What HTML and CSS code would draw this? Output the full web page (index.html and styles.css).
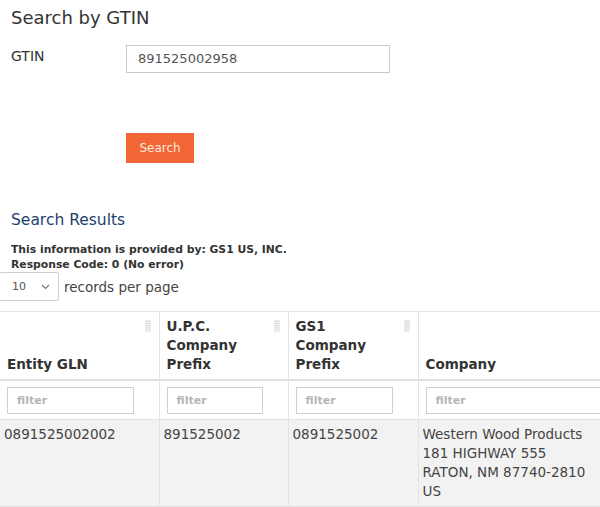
FILE: index.html
```html
<!DOCTYPE html>
<html>
<head>
<meta charset="utf-8">
<link rel="stylesheet" href="styles.css">
</head>
<body>
<div class="page">
  <section class="search">
    <h1 class="title">Search by GTIN</h1>
    <div class="field">
      <label class="label">GTIN</label>
      <div class="input">891525002958</div>
    </div>
    <div class="actions">
      <button class="btn">Search</button>
    </div>
  </section>
  <section class="results">
    <h2 class="subtitle">Search Results</h2>
    <p class="info">This information is provided by: GS1 US, INC.<br>Response Code: 0 (No error)</p>
    <div class="length">
      <div class="select"><span>10</span>
        <svg class="chev" width="9" height="6" viewBox="0 0 9 6"><path d="M1 1l3.5 3.5L8 1" fill="none" stroke="#777" stroke-width="1.2"/></svg>
      </div>
      <span class="length-label">records per page</span>
    </div>
  </section>
  <div class="table-wrap">
    <table class="grid">
      <colgroup>
        <col class="c1"><col class="c2"><col class="c3"><col class="c4">
      </colgroup>
      <thead>
        <tr class="head">
          <th><span class="sort"></span>Entity GLN</th>
          <th><span class="sort"></span>U.P.C.<br>Company<br>Prefix</th>
          <th><span class="sort"></span>GS1<br>Company<br>Prefix</th>
          <th>Company</th>
        </tr>
        <tr class="filters">
          <td><div class="filter f1">filter</div></td>
          <td><div class="filter f2">filter</div></td>
          <td><div class="filter f3">filter</div></td>
          <td><div class="filter f4">filter</div></td>
        </tr>
      </thead>
      <tbody>
        <tr class="row">
          <td>0891525002002</td>
          <td>891525002</td>
          <td>0891525002</td>
          <td>Western Wood Products<br>181 HIGHWAY 555<br>RATON, NM 87740-2810<br>US</td>
        </tr>
      </tbody>
    </table>
  </div>
</div>
</body>
</html>
```
FILE: styles.css
```css
html, body {
  margin: 0;
  padding: 0;
  background: #fff;
  overflow: hidden;
}
body {
  font-family: "DejaVu Sans", Verdana, sans-serif;
  color: #333;
  width: 600px;
  height: 507px;
}
.page {
  width: 600px;
  overflow: hidden;
}
.search {
  padding: 0 11px;
}
.title {
  margin: 0;
  padding-top: 6px;
  font-size: 18px;
  font-weight: normal;
  line-height: 24px;
  color: #333;
}
.field {
  display: flex;
  margin-top: 15px;
}
.label {
  width: 115px;
  font-size: 14px;
  line-height: 18px;
  padding-top: 2px;
}
.input {
  box-sizing: border-box;
  width: 264px;
  height: 28px;
  border: 1px solid #c8c8c8;
  padding: 0 11px;
  font-size: 13px;
  line-height: 26px;
  color: #555;
}
.actions {
  padding-left: 115px;
  margin-top: 60px;
}
.btn {
  box-sizing: border-box;
  width: 68px;
  height: 30px;
  border: 0;
  background: #f26535;
  color: #fde9de;
  font-family: "DejaVu Sans", Verdana, sans-serif;
  font-size: 12px;
  padding: 0;
}
.results {
  padding: 0 11px;
}
.subtitle {
  margin: 47px 0 0;
  font-size: 15.5px;
  font-weight: normal;
  line-height: 20px;
  color: #1d3f6e;
}
.info {
  margin: 12px 0 0;
  font-size: 10.8px;
  font-weight: bold;
  line-height: 15px;
  color: #333;
}
.length {
  display: flex;
  align-items: center;
  margin-left: -12px;
}
.select {
  box-sizing: border-box;
  width: 60px;
  height: 29px;
  border: 1px solid #cfcfcf;
  border-radius: 2px;
  display: flex;
  align-items: center;
  justify-content: space-between;
  padding: 0 8px 0 12px;
  font-size: 11px;
  color: #555;
}
.length-label {
  margin-left: 5px;
  font-size: 13.5px;
  color: #444;
}
.table-wrap {
  margin-top: 10px;
  width: 600px;
  overflow: hidden;
}
.grid {
  border-collapse: collapse;
  table-layout: fixed;
  width: 640px;
  font-size: 13.5px;
}
.c1 { width: 159px; }
.c2 { width: 129px; }
.c3 { width: 130px; }
.c4 { width: 222px; }
.grid th, .grid td {
  border-left: 1px solid #e3e3e3;
  border-right: 1px solid #e3e3e3;
}
.grid th:first-child, .grid td:first-child {
  border-left: 0;
}
.head th {
  position: relative;
  border-top: 1px solid #e6e6e6;
  border-bottom: 2px solid #e0e0e0;
  text-align: left;
  vertical-align: bottom;
  height: 66px;
  box-sizing: border-box;
  padding: 5px 7px 5px;
  font-weight: bold;
  line-height: 19px;
  color: #333;
}
.sort {
  position: absolute;
  top: 8px;
  right: 8px;
  width: 6px;
  height: 12px;
  background: repeating-linear-gradient(to bottom, #dcdcdc 0 1px, #f2f2f2 1px 2px);
  border: 1px solid #ebebeb;
  box-sizing: border-box;
}
.filters td {
  padding: 6px 7px 5px;
  border-bottom: 1px solid #e0e0e0;
}
.filter {
  box-sizing: border-box;
  height: 27px;
  border: 1px solid #cfcfcf;
  padding: 0 9px;
  font-size: 11px;
  font-weight: bold;
  line-height: 25px;
  color: #b5b5b5;
}
.f1 { width: 127px; }
.f2 { width: 96px; }
.f3 { width: 97px; }
.f4 { width: 200px; }
.row td {
  background: #f2f2f2;
  vertical-align: top;
  padding: 5px 4px;
  line-height: 19px;
  color: #444;
  border-bottom: 1px solid #e3e3e3;
}
```
